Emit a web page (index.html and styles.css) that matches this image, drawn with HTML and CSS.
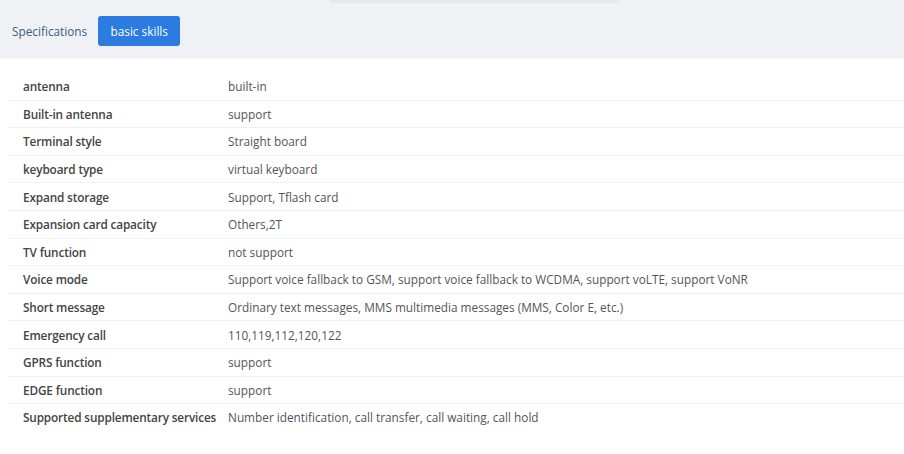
FILE: index.html
```html
<!DOCTYPE html>
<html>
<head>
<meta charset="utf-8">
<link rel="stylesheet" href="styles.css">
</head>
<body>
<div class="header">
  <div class="topbar"></div>
  <div class="tabs">
    <span class="tab">Specifications</span>
    <span class="tab active">basic skills</span>
  </div>
</div>
<div class="specs">
  <div class="row"><div class="k">antenna</div><div class="v">built-in</div></div>
  <div class="row"><div class="k">Built-in antenna</div><div class="v">support</div></div>
  <div class="row"><div class="k">Terminal style</div><div class="v">Straight board</div></div>
  <div class="row"><div class="k">keyboard type</div><div class="v">virtual keyboard</div></div>
  <div class="row"><div class="k">Expand storage</div><div class="v">Support, Tflash card</div></div>
  <div class="row"><div class="k">Expansion card capacity</div><div class="v">Others,2T</div></div>
  <div class="row"><div class="k">TV function</div><div class="v">not support</div></div>
  <div class="row"><div class="k">Voice mode</div><div class="v">Support voice fallback to GSM, support voice fallback to WCDMA, support voLTE, support VoNR</div></div>
  <div class="row"><div class="k">Short message</div><div class="v">Ordinary text messages, MMS multimedia messages (MMS, Color E, etc.)</div></div>
  <div class="row"><div class="k">Emergency call</div><div class="v">110,119,112,120,122</div></div>
  <div class="row"><div class="k">GPRS function</div><div class="v">support</div></div>
  <div class="row"><div class="k">EDGE function</div><div class="v">support</div></div>
  <div class="row last"><div class="k">Supported supplementary services</div><div class="v">Number identification, call transfer, call waiting, call hold</div></div>
</div>
</body>
</html>
```

FILE: styles.css
```css
html, body {
  margin: 0;
  padding: 0;
  background: #ffffff;
  font-family: "Open Sans", "Noto Sans", sans-serif;
  font-size: 11.8px;
}
.header {
  position: relative;
  background: #eff1f5;
  height: 58px;
  display: flex;
  align-items: center;
  border-bottom: 1px solid #f6f7f9;
}
.topbar {
  position: absolute;
  left: 330px;
  top: 0;
  width: 290px;
  height: 3px;
  background: #e8e9ec;
}
.tabs {
  display: flex;
  align-items: center;
  gap: 11px;
  padding-left: 12px;
  margin-top: 4px;
}
.tab {
  color: #3b5d82;
  font-size: 11.8px;
}
.tab.active {
  background: #2b7be0;
  color: #ffffff;
  border-radius: 3px;
  width: 82px;
  height: 30px;
  display: flex;
  align-items: center;
  justify-content: center;
}
.specs {
  margin: 14px 0 0 8px;
  display: flex;
  flex-direction: column;
}
.row {
  display: flex;
  align-items: center;
  height: 26.6px;
  border-bottom: 1px solid #eef0f2;
}
.row.last {
  border-bottom: none;
}
.k {
  width: 205px;
  padding-left: 15px;
  font-weight: 600;
  color: #444;
  white-space: nowrap;
  letter-spacing: -0.15px;
}
.v {
  color: #555;
  white-space: nowrap;
}
```
